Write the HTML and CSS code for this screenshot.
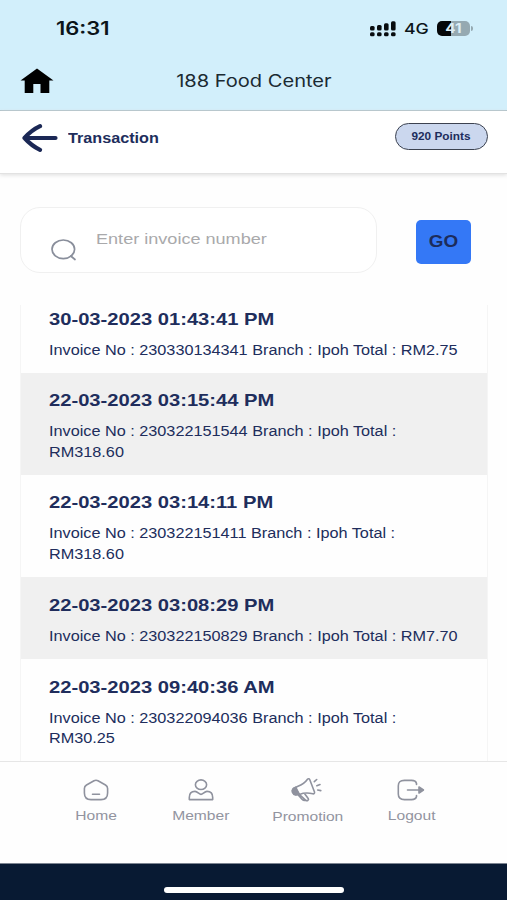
FILE: index.html
```html
<!DOCTYPE html>
<html lang="en">
<head>
<meta charset="utf-8">
<title>Transaction</title>
<link rel="stylesheet" href="styles.css">
</head>
<body>
<div class="app">
  <header class="top">
    <div class="status">
      <span class="time wide">16:31</span>
      <div class="indicators">
        <svg class="signal" width="26" height="16" viewBox="0 0 26 16">
          <g fill="#080c0f">
            <rect x="0" y="5" width="4.6" height="4.6" rx="1.5"/><rect x="7" y="4" width="4.6" height="5.6" rx="1.5"/><rect x="14" y="2.3" width="4.6" height="7.3" rx="1.5"/><rect x="21" y="0.3" width="4.6" height="9.3" rx="1.5"/>
            <rect x="0" y="11.3" width="4.6" height="4" rx="1.5"/><rect x="7" y="11.3" width="4.6" height="4" rx="1.5"/><rect x="14" y="11.3" width="4.6" height="4" rx="1.5"/><rect x="21" y="11.3" width="4.6" height="4" rx="1.5"/>
          </g>
        </svg>
        <span class="network wide">4G</span>
        <div class="battery"><span class="level wide">41</span></div>
        <i class="battery-tip"></i>
      </div>
    </div>
    <div class="brand">
      <svg class="house" width="34" height="26" viewBox="0 0 34 26"><path d="M17 .5 33.5 12.5H29.3V25H20.5V16H13.3V25H4.7V12.5H.5Z"/></svg>
      <h1><span class="wide">188 Food Center</span></h1>
    </div>
  </header>

  <section class="titlebar">
    <svg class="back" width="36" height="28" viewBox="0 0 36 28"><path d="M18 2.2C12 5 7 9 2.5 14 7 19 12 23 18 25.8M2.5 14H33.5" fill="none" stroke="#1b2855" stroke-width="4.2" stroke-linecap="round" stroke-linejoin="round"/></svg>
    <h2><span class="wide">Transaction</span></h2>
    <div class="points"><span class="wide">920 Points</span></div>
  </section>

  <form class="search">
    <div class="field">
      <svg width="28" height="24" viewBox="0 0 28 24"><g fill="none" stroke="#898e9b" stroke-width="1.7" stroke-linecap="round"><ellipse cx="13.3" cy="11.3" rx="11.3" ry="9.3"/><path d="m20.8 18 4.2 3.5"/></g></svg>
      <span class="placeholder wide">Enter invoice number</span>
    </div>
    <div class="go"><span class="wide">GO</span></div>
  </form>

  <main class="list">
    <article><h3 class="wide">30-03-2023 01:43:41 PM</h3><p class="wide">Invoice No : 230330134341 Branch : Ipoh Total : RM2.75</p></article>
    <article><h3 class="wide">22-03-2023 03:15:44 PM</h3><p class="wide">Invoice No : 230322151544 Branch : Ipoh Total : RM318.60</p></article>
    <article><h3 class="wide">22-03-2023 03:14:11 PM</h3><p class="wide">Invoice No : 230322151411 Branch : Ipoh Total : RM318.60</p></article>
    <article><h3 class="wide">22-03-2023 03:08:29 PM</h3><p class="wide">Invoice No : 230322150829 Branch : Ipoh Total : RM7.70</p></article>
    <article><h3 class="wide">22-03-2023 09:40:36 AM</h3><p class="wide">Invoice No : 230322094036 Branch : Ipoh Total : RM30.25</p></article>
  </main>

  <nav class="tabs">
    <div class="tab">
      <svg width="32" height="26" viewBox="0 0 32 26"><path d="M14 3.8 6.5 8C5 9 4.4 10 4.4 11.5V16C4.4 20.5 6.5 22.6 11 22.6H21C25.5 22.6 27.6 20.5 27.6 16V11.5C27.6 10 27 9 25.5 8L18 3.8Q16 2.8 14 3.8ZM12.5 17.2H19.5"/></svg>
      <span class="wide">Home</span>
    </div>
    <div class="tab">
      <svg width="32" height="26" viewBox="0 0 32 26"><ellipse cx="16" cy="7.7" rx="5.6" ry="4.8"/><path d="M4.3 22.6V20.5C4.3 16.8 6.5 14.4 10 14.4 12.5 14.4 14.3 17.4 16 17.4S19.5 14.4 22 14.4C25.5 14.4 27.7 16.8 27.7 20.5V22.6Z"/></svg>
      <span class="wide">Member</span>
    </div>
    <div class="tab promotion">
      <svg width="34" height="26" viewBox="0 0 34 26"><path d="M4.3 11.5 9 9.2C14 7.5 16.5 5 18.5 2.2 19.5 1.4 20.4 1.8 20.8 2.8L25.5 15C25.8 16.4 25 17 23.8 16.8 18.5 15.4 14.5 15.8 10.5 17.4L6.5 18C3.4 17 2.5 13.6 4.3 11.5ZM6 10.8 10.2 17.2M10.5 17.5 16.8 23.3C18.3 24.3 20.2 23 19.2 21.5L15.5 16.6M9 17.8 13 22.2Q14.7 24 16.8 23.3"/><path d="m4.2 11.8 2.6-1.5 3.5 7-3.7.3C3 16.5 2.4 13.7 4.2 11.8Z" class="solid"/><path d="m25.3 4.7 2.4-2.2M27.8 8.7 31 7.5M28.7 13 31.8 13.6"/></svg>
      <span class="wide">Promotion</span>
    </div>
    <div class="tab">
      <svg width="32" height="26" viewBox="0 0 32 26"><path d="M21.5 7.5V6.5C21 4 19.5 3.4 16.5 3.4H9.5C5 3.4 3.3 5.2 3.3 9V17C3.3 20.8 5 22.6 9.5 22.6H16.5C19.5 22.6 21 22 21.5 19.5V18.5M12.5 13H28"/><path class="solid" d="M24 10 28.4 13 24 16Z"/></svg>
      <span class="wide">Logout</span>
    </div>
  </nav>
  <footer class="homebar"><i></i></footer>
</div>
</body>
</html>
```
FILE: styles.css
```css
* { box-sizing: border-box; }
body { margin: 0; background: #fefefe; font-family: "Liberation Sans", sans-serif; color: #202d5c; }
h1, h2, h3, p { margin: 0; }
svg { display: block; flex: none; }
.app { width: 507px; height: 900px; overflow: hidden; display: flex; flex-direction: column; }
.app > * { flex: none; }
.wide { display: inline-block; white-space: nowrap; transform: scaleX(1.18); transform-origin: left center; }

.top { height: 111px; background: #d2effb; border-bottom: 1px solid #adc0c8; color: #1b2a32; }
.status { height: 57px; padding: 0 34px 0 56px; display: flex; align-items: center; justify-content: space-between; color: #0b1419; }
.time { font: 600 18px/20px Inter, sans-serif; transform: scaleX(1.22); }
.indicators { display: flex; align-items: center; }
.network { width: 33px; margin-left: 8px; font: 500 15px/16px Inter, sans-serif; }
.battery { width: 33px; height: 15px; border-radius: 5px; background: linear-gradient(90deg, #050708 41%, #95a9b1 41%); text-align: center; }
.level { font: 700 13px/15px Inter, sans-serif; color: #dcedf4; transform-origin: center; display: block; }
.battery-tip { width: 2px; height: 5px; margin-left: 1px; border-radius: 0 2px 2px 0; background: #95a9b1; }
.brand { height: 47px; padding: 0 20px; display: grid; grid-template-columns: 34px 1fr 34px; align-items: center; }
.brand h1 { font: 400 17px/24px Inter, sans-serif; text-align: center; }
.brand h1 .wide { transform-origin: center; }

.titlebar { height: 63px; padding: 0 19px 9px 22px; display: flex; align-items: center; background: #fff; border-bottom: 1px solid #e2e2e2; box-shadow: 0 1px 4px #ddd; }
.titlebar h2 { margin-left: 10px; flex: 1; font-size: 14px; line-height: 18px; }
.titlebar h2 .wide { transform: scaleX(1.155); }
.points { width: 93px; height: 27px; margin-bottom: 3px; border: 1.5px solid #3c4250; border-radius: 14px; background: #cbd7ee; text-align: center; font-weight: bold; font-size: 10px; line-height: 26px; }
.points .wide { transform-origin: center; }

.search { height: 117px; padding: 32.5px 36px 0 20px; display: flex; justify-content: space-between; }
.field { width: 357px; height: 66px; border: 1px solid #f0f0f0; border-radius: 20px; display: flex; padding: 30px 0 0 29px; background: #fff; }
.placeholder { margin: -9px 0 0 18px; font-size: 15px; line-height: 20px; height: 20px; color: #a9a9ab; transform: scaleX(1.205); }
.go { width: 55px; height: 44px; margin-top: 13px; border-radius: 5px; background: #3478f6; color: #1c2c5c; text-align: center; font-size: 16px; font-weight: bold; line-height: 44px; }
.go .wide { transform-origin: center; }

.list { width: 468px; height: 456px; margin: 13.5px 0 0 20px; overflow: hidden; border: solid #f5f5f5; border-width: 0 1px; }
.list article { padding: 17px 0 13px 28px; }
.list article:first-child { padding-top: 4px; padding-bottom: 12px; }
.list article + article { padding-top: 17.6px; padding-bottom: 12.2px; }
.list article:nth-child(even) { background: #f0f0f0; }
.list h3 { display: block; width: 350px; margin-bottom: 11px; font-size: 17px; line-height: 21px; transform: scaleX(1.186); }
.list p { display: block; width: 352px; white-space: normal; font-size: 13.8px; line-height: 20.2px; transform: scaleX(1.177); }

.tabs { height: 102.5px; padding: 15px 43px 0; border-top: 1px solid #e6e6e6; display: grid; grid-template-columns: repeat(4, 1fr); background: #fefefe; color: #9294a0; }
.tab { display: flex; flex-direction: column; align-items: center; font-size: 13.5px; }
.tab svg { fill: none; stroke: #8f929e; stroke-width: 1.6; stroke-linecap: round; stroke-linejoin: round; }
.tab .solid { fill: #8f929e; }
.tab .wide { margin-top: 4px; line-height: 18px; transform: scaleX(1.155); transform-origin: center; }
.tab.promotion .wide { margin: 5px 0 0 3px; }
.homebar { height: 37.5px; padding-top: 22.5px; background: #081a33; border-top: 1px solid #7c8491; }
.homebar i { display: block; width: 180px; height: 6px; margin-left: 164px; border-radius: 3px; background: #fff; }
```
